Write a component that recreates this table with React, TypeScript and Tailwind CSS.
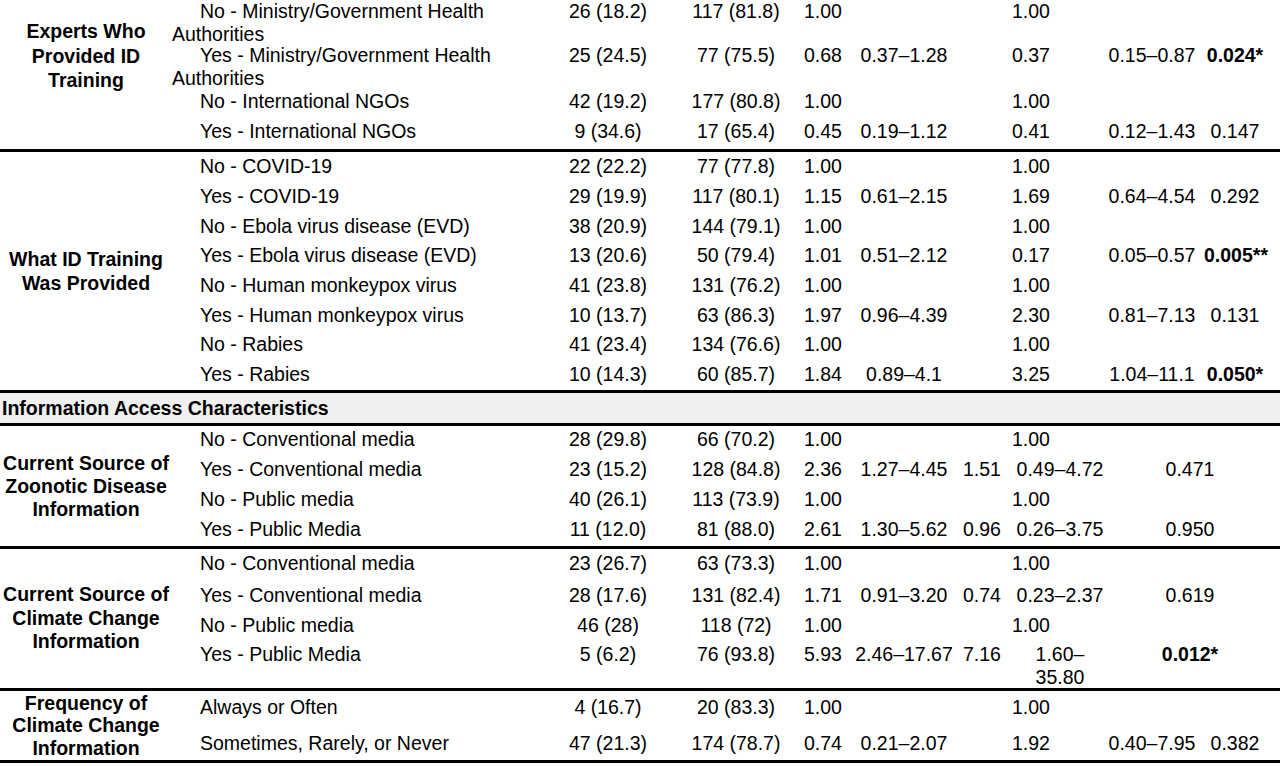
import React from "react";

type Layout = "top" | "alt";

interface RowData {
  cat: React.ReactNode;
  c: string;
  d: string;
  e: string;
  f?: string;
  g?: string;
  h?: React.ReactNode;
  i?: React.ReactNode;
  layout?: Layout;
  cls: string;
}

const B = ({ children }: { children: React.ReactNode }) => <span className="font-bold">{children}</span>;

function Row({ r }: { r: RowData }) {
  const layout = r.layout ?? "top";
  const grid =
    layout === "top"
      ? "grid grid-cols-[372px_128px_128px_46px_116px_138px_104px_76px]"
      : "grid grid-cols-[372px_128px_128px_46px_116px_40px_116px_162px]";
  return (
    <div className={`${grid} ${r.cls} leading-[23px]`}>
      <div className="indent-[28px]">{r.cat}</div>
      <div className="text-center whitespace-nowrap">{r.c}</div>
      <div className="text-center whitespace-nowrap">{r.d}</div>
      <div className="text-center whitespace-nowrap">{r.e}</div>
      <div className="text-center whitespace-nowrap">{r.f ?? ""}</div>
      <div className="text-center whitespace-nowrap">{r.g ?? ""}</div>
      <div className={layout === "top" ? "text-center whitespace-nowrap" : "text-center px-[13px]"}>{r.h ?? ""}</div>
      <div className={layout === "top" ? "text-center whitespace-nowrap pr-[14px]" : "text-center whitespace-nowrap pr-[18px]"}>{r.i ?? ""}</div>
    </div>
  );
}

function Section({
  label,
  labelCls,
  rows,
}: {
  label: React.ReactNode;
  labelCls: string;
  rows: RowData[];
}) {
  return (
    <div className="flex">
      <div className={`w-[172px] shrink-0 flex justify-center text-center font-bold ${labelCls}`}>
        <div>{label}</div>
      </div>
      <div className="flex flex-col">
        {rows.map((r, k) => (
          <Row key={k} r={r} />
        ))}
      </div>
    </div>
  );
}

const Rule = () => <div className="h-[3px] bg-black" />;

const s1: RowData[] = [
  {
    cat: (
      <>
        No - Ministry/Government Health
        <br />
        Authorities
      </>
    ),
    c: "26 (18.2)",
    d: "117 (81.8)",
    e: "1.00",
    g: "1.00",
    cls: "h-[44px] pt-[0px]",
  },
  {
    cat: (
      <>
        Yes - Ministry/Government Health
        <br />
        Authorities
      </>
    ),
    c: "25 (24.5)",
    d: "77 (75.5)",
    e: "0.68",
    f: "0.37–1.28",
    g: "0.37",
    h: "0.15–0.87",
    i: <B>0.024*</B>,
    cls: "h-[46px] pt-[0px]",
  },
  { cat: "No - International NGOs", c: "42 (19.2)", d: "177 (80.8)", e: "1.00", g: "1.00", cls: "h-[27px] pt-[0px]" },
  {
    cat: "Yes - International NGOs",
    c: "9 (34.6)",
    d: "17 (65.4)",
    e: "0.45",
    f: "0.19–1.12",
    g: "0.41",
    h: "0.12–1.43",
    i: "0.147",
    cls: "h-[32px] pt-[3px]",
  },
];

const s2: RowData[] = [
  { cat: "No - COVID-19", c: "22 (22.2)", d: "77 (77.8)", e: "1.00", g: "1.00", cls: "h-[30px] pt-[3px]" },
  {
    cat: "Yes - COVID-19",
    c: "29 (19.9)",
    d: "117 (80.1)",
    e: "1.15",
    f: "0.61–2.15",
    g: "1.69",
    h: "0.64–4.54",
    i: "0.292",
    cls: "h-[30px] pt-[3px]",
  },
  { cat: "No - Ebola virus disease (EVD)", c: "38 (20.9)", d: "144 (79.1)", e: "1.00", g: "1.00", cls: "h-[29px] pt-[3px]" },
  {
    cat: "Yes - Ebola virus disease (EVD)",
    c: "13 (20.6)",
    d: "50 (79.4)",
    e: "1.01",
    f: "0.51–2.12",
    g: "0.17",
    h: "0.05–0.57",
    i: <B>0.005**</B>,
    cls: "h-[30px] pt-[3px]",
  },
  { cat: "No - Human monkeypox virus", c: "41 (23.8)", d: "131 (76.2)", e: "1.00", g: "1.00", cls: "h-[30px] pt-[3px]" },
  {
    cat: "Yes - Human monkeypox virus",
    c: "10 (13.7)",
    d: "63 (86.3)",
    e: "1.97",
    f: "0.96–4.39",
    g: "2.30",
    h: "0.81–7.13",
    i: "0.131",
    cls: "h-[29px] pt-[3px]",
  },
  { cat: "No - Rabies", c: "41 (23.4)", d: "134 (76.6)", e: "1.00", g: "1.00", cls: "h-[30px] pt-[3px]" },
  {
    cat: "Yes - Rabies",
    c: "10 (14.3)",
    d: "60 (85.7)",
    e: "1.84",
    f: "0.89–4.1",
    g: "3.25",
    h: "1.04–11.1",
    i: <B>0.050*</B>,
    cls: "h-[30px] pt-[3px]",
  },
];

const s3: RowData[] = [
  { cat: "No - Conventional media", c: "28 (29.8)", d: "66 (70.2)", e: "1.00", g: "1.00", cls: "h-[30px] pt-[2px]" },
  {
    cat: "Yes - Conventional media",
    c: "23 (15.2)",
    d: "128 (84.8)",
    e: "2.36",
    f: "1.27–4.45",
    g: "1.51",
    h: "0.49–4.72",
    i: "0.471",
    layout: "alt",
    cls: "h-[30px] pt-[2px]",
  },
  { cat: "No - Public media", c: "40 (26.1)", d: "113 (73.9)", e: "1.00", g: "1.00", cls: "h-[30px] pt-[2px]" },
  {
    cat: "Yes - Public Media",
    c: "11 (12.0)",
    d: "81 (88.0)",
    e: "2.61",
    f: "1.30–5.62",
    g: "0.96",
    h: "0.26–3.75",
    i: "0.950",
    layout: "alt",
    cls: "h-[30px] pt-[2px]",
  },
];

const s4: RowData[] = [
  { cat: "No - Conventional media", c: "23 (26.7)", d: "63 (73.3)", e: "1.00", g: "1.00", cls: "h-[32px] pt-[3px]" },
  {
    cat: "Yes - Conventional media",
    c: "28 (17.6)",
    d: "131 (82.4)",
    e: "1.71",
    f: "0.91–3.20",
    g: "0.74",
    h: "0.23–2.37",
    i: "0.619",
    layout: "alt",
    cls: "h-[30px] pt-[3px]",
  },
  { cat: "No - Public media", c: "46 (28)", d: "118 (72)", e: "1.00", g: "1.00", cls: "h-[30px] pt-[3px]" },
  {
    cat: "Yes - Public Media",
    c: "5 (6.2)",
    d: "76 (93.8)",
    e: "5.93",
    f: "2.46–17.67",
    g: "7.16",
    h: (
      <>
        1.60–
        <br />
        35.80
      </>
    ),
    i: <B>0.012*</B>,
    layout: "alt",
    cls: "h-[47px] pt-[2px]",
  },
];

const s5: RowData[] = [
  { cat: "Always or Often", c: "4 (16.7)", d: "20 (83.3)", e: "1.00", g: "1.00", cls: "h-[35px] pt-[5px]" },
  {
    cat: "Sometimes, Rarely, or Never",
    c: "47 (21.3)",
    d: "174 (78.7)",
    e: "0.74",
    f: "0.21–2.07",
    g: "1.92",
    h: "0.40–7.95",
    i: "0.382",
    cls: "h-[34px] pt-[6px]",
  },
];

export default function App() {
  return (
    <div className="w-[1280px] h-[766px] overflow-hidden bg-white text-black font-['Liberation_Sans',Arial,Helvetica,sans-serif] text-[19.5px]">
      <Section
        label={
          <>
            Experts Who
            <br />
            Provided ID
            <br />
            Training
          </>
        }
        labelCls="items-start pt-[19px] leading-[24.5px]"
        rows={s1}
      />
      <Rule />
      <Section
        label={
          <>
            What ID Training
            <br />
            Was Provided
          </>
        }
        labelCls="items-center leading-[24px]"
        rows={s2}
      />
      <Rule />
      <div className="h-[30px] bg-[#f0f0f0] pl-[2px] font-bold flex items-center leading-[23px]">
        Information Access Characteristics
      </div>
      <Rule />
      <Section
        label={
          <>
            Current Source of
            <br />
            Zoonotic Disease
            <br />
            Information
          </>
        }
        labelCls="items-center leading-[23px]"
        rows={s3}
      />
      <Rule />
      <Section
        label={
          <>
            Current Source of
            <br />
            Climate Change
            <br />
            Information
          </>
        }
        labelCls="items-center leading-[23.5px]"
        rows={s4}
      />
      <Rule />
      <Section
        label={
          <>
            Frequency of
            <br />
            Climate Change
            <br />
            Information
          </>
        }
        labelCls="items-center leading-[22.5px]"
        rows={s5}
      />
      <Rule />
    </div>
  );
}
